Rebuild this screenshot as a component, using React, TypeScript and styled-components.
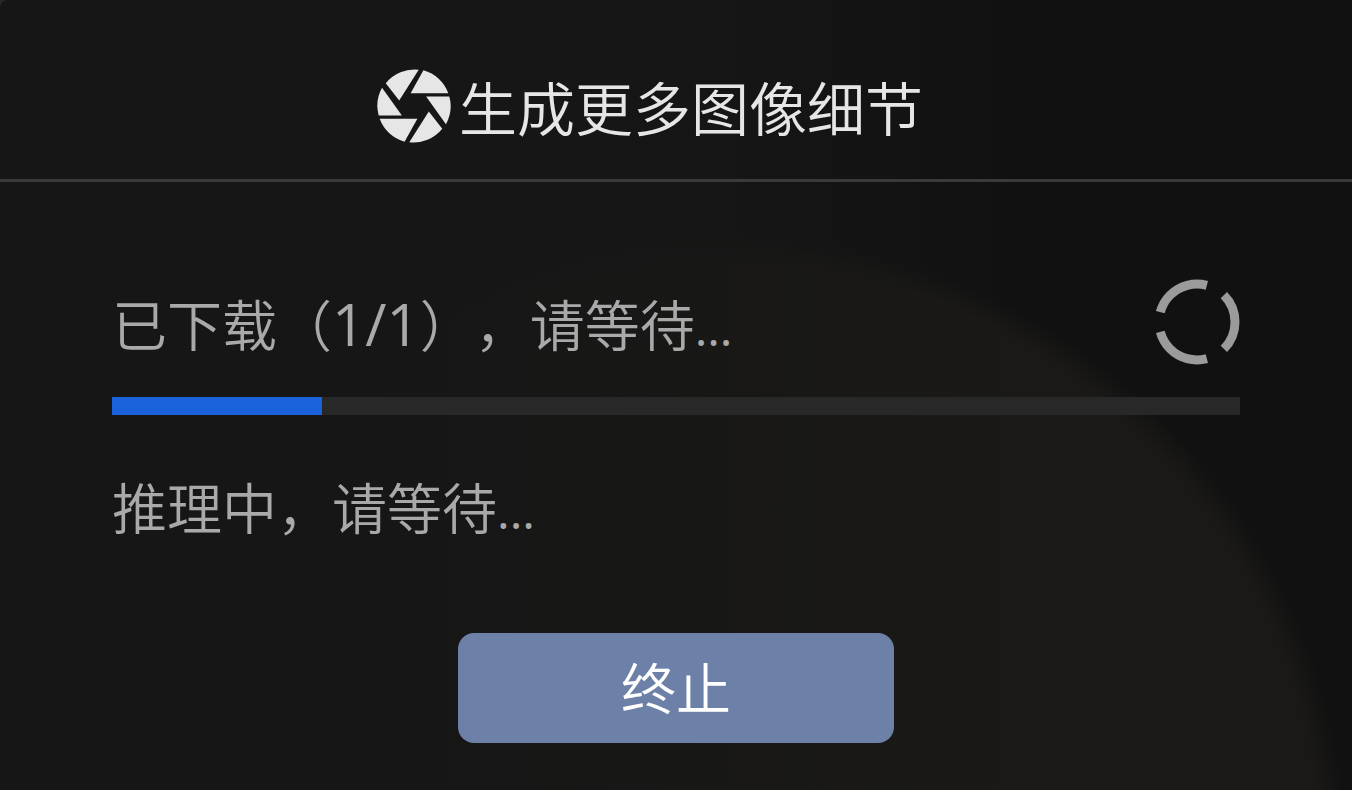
import React from "react";
import styled, { createGlobalStyle } from "styled-components";

const GlobalStyle = createGlobalStyle`
  * { box-sizing: border-box; }
  html, body { margin: 0; background: #2b2725; }
  body {
    font-family: "Open Sans", "Noto Sans CJK SC", sans-serif;
    font-weight: 350;
    text-spacing-trim: space-all;
  }
  h1, p { margin: 0; font-weight: 350; }
`;

const Dialog = styled.main`
  min-height: 100vh;
  border-top-left-radius: 8px;
  background:
    linear-gradient(90deg, #161616 25%, rgba(22, 22, 22, 0) 75%),
    radial-gradient(circle at 53% 865px, #1a1917 604px, rgba(26, 25, 23, 0) 632px),
    linear-gradient(90deg, #161616 45%, #111111 75%);
`;

const Header = styled.header`
  display: flex;
  align-items: center;
  justify-content: center;
  gap: 8px;
  height: 182px;
  padding: 32px 52px 0 0;
  border-bottom: 3px solid #3b3a3a;
  color: #e6e6e6;
`;

const Title = styled.h1`
  padding-top: 6px;
  font-size: 58px;
  line-height: 80px;
  white-space: nowrap;
`;

const Content = styled.section`
  display: flex;
  flex-direction: column;
  padding: 96px 112px 46px;
  color: #a9a9a9;
`;

const StatusRow = styled.div`
  display: flex;
  align-items: center;
  justify-content: space-between;
  height: 88px;
  margin-bottom: 31px;
`;

const Status = styled.p`
  padding-top: 6px;
  font-size: 55px;
  line-height: 80px;
  white-space: nowrap;
`;

const Dots = styled.span`
  font-size: 48px;
  font-weight: 400;
  line-height: 1;
`;

const Count = styled.span`
  font-size: 58px;
  font-weight: 400;
  line-height: 1;
`;

const Progress = styled.div`
  height: 18px;
  margin-bottom: 47px;
  background: #282828;
`;

const ProgressFill = styled.div`
  height: 100%;
  background: #1a62dc;
`;

const StopButton = styled.button`
  align-self: center;
  width: 436px;
  height: 110px;
  margin-top: 85px;
  border: 0;
  border-radius: 16px;
  background: #6c80a8;
  color: #ffffff;
  font: inherit;
  font-size: 55px;
  line-height: 80px;
  cursor: pointer;
`;

const ApertureIcon = () => (
  <svg width="74" height="74" viewBox="0 0 220 220" fill="currentColor" aria-hidden="true">
    <path d="M26 42 L66 94 L124 2 A109 109 0 0 0 26 42Z" />
    <path d="M138 4 L100 72 L212 72 A109 109 0 0 0 138 4Z" />
    <path d="M146 82 L215 82 A109 109 0 0 1 205 164Z" />
    <path d="M194 178 L154 126 L96 218 A109 109 0 0 0 194 178Z" />
    <path d="M82 216 L120 148 L8 148 A109 109 0 0 0 82 216Z" />
    <path d="M74 138 L5 138 A109 109 0 0 1 15 56Z" />
  </svg>
);

const Spinner = () => (
  <svg width="86" height="86" viewBox="0 0 86 86" role="img" aria-label="加载中">
    <circle
      cx="43"
      cy="43"
      r="38"
      fill="none"
      stroke="#9b9b9b"
      strokeWidth="9"
      pathLength="360"
      strokeDasharray="90 30"
      transform="rotate(-45 43 43)"
    />
  </svg>
);

export default function App() {
  const progress = 18.6;
  return (
    <>
      <GlobalStyle />
      <Dialog lang="zh-CN">
        <Header>
          <ApertureIcon />
          <Title>生成更多图像细节</Title>
        </Header>
        <Content>
          <StatusRow>
            <Status>
              已下载（<Count>1/1</Count>），请等待<Dots>...</Dots>
            </Status>
            <Spinner />
          </StatusRow>
          <Progress role="progressbar" aria-label="下载进度" aria-valuenow={progress} aria-valuemin={0} aria-valuemax={100}>
            <ProgressFill style={{ width: `${progress}%` }} />
          </Progress>
          <Status>
            推理中，请等待<Dots>...</Dots>
          </Status>
          <StopButton type="button">终止</StopButton>
        </Content>
      </Dialog>
    </>
  );
}
